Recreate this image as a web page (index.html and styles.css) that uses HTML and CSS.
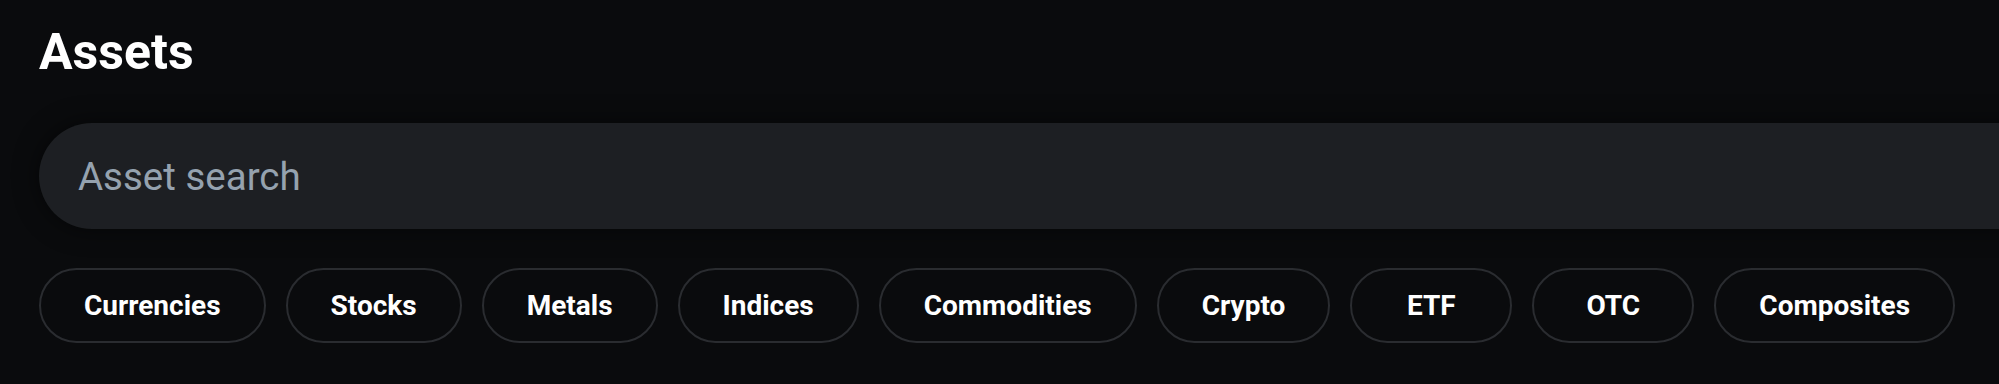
FILE: index.html
```html
<!DOCTYPE html>
<html lang="en">
<head>
  <meta charset="UTF-8" />
  <title>Assets</title>
  <link rel="stylesheet" href="styles.css">
</head>
<body>

  <div class="assets">
    <h1 class="title">Assets</h1>

    <div class="search">
      <input type="text" class="search-input" placeholder="Asset search">
    </div>

    <div class="filters">
      <button class="chip">Currencies</button>
      <button class="chip">Stocks</button>
      <button class="chip">Metals</button>
      <button class="chip">Indices</button>
      <button class="chip">Commodities</button>
      <button class="chip">Crypto</button>
      <button class="chip">ETF</button>
      <button class="chip">OTC</button>
      <button class="chip">Composites</button>
    </div>
  </div>

</body>
</html>
```

FILE: styles.css
```css
body {
  margin: 0;
  height: 100vh;
  background: #0a0b0d;
  overflow: hidden;
  font-family: Roboto, "Liberation Sans", sans-serif;
  color: #fff;
}

.assets {
  padding: 27px 0 0 39px;
}

.title {
  margin: 0;
  font-size: 50px;
  font-weight: 700;
  line-height: 1;
}

.search {
  margin-top: 46px;
  margin-right: -80px;
  height: 106px;
  border-radius: 53px;
  background: #1d1f23;
  box-shadow: 0 0 24px rgba(0, 0, 0, 0.55);
  display: flex;
  align-items: center;
  padding-left: 39px;
}

.search-input {
  flex: 1;
  border: none;
  outline: none;
  background: transparent;
  padding: 0;
  font-family: inherit;
  font-size: 38.5px;
  color: #fff;
}

.search-input::placeholder {
  color: #95a2af;
}

.filters {
  display: flex;
  gap: 20px;
  margin-top: 39px;
}

.chip {
  height: 75px;
  min-width: 162px;
  padding: 0 43px;
  border: 2px solid #2a2c30;
  border-radius: 38px;
  background: #0a0b0d;
  color: #fff;
  font-family: inherit;
  font-size: 28px;
  font-weight: 700;
  cursor: pointer;
}
```
